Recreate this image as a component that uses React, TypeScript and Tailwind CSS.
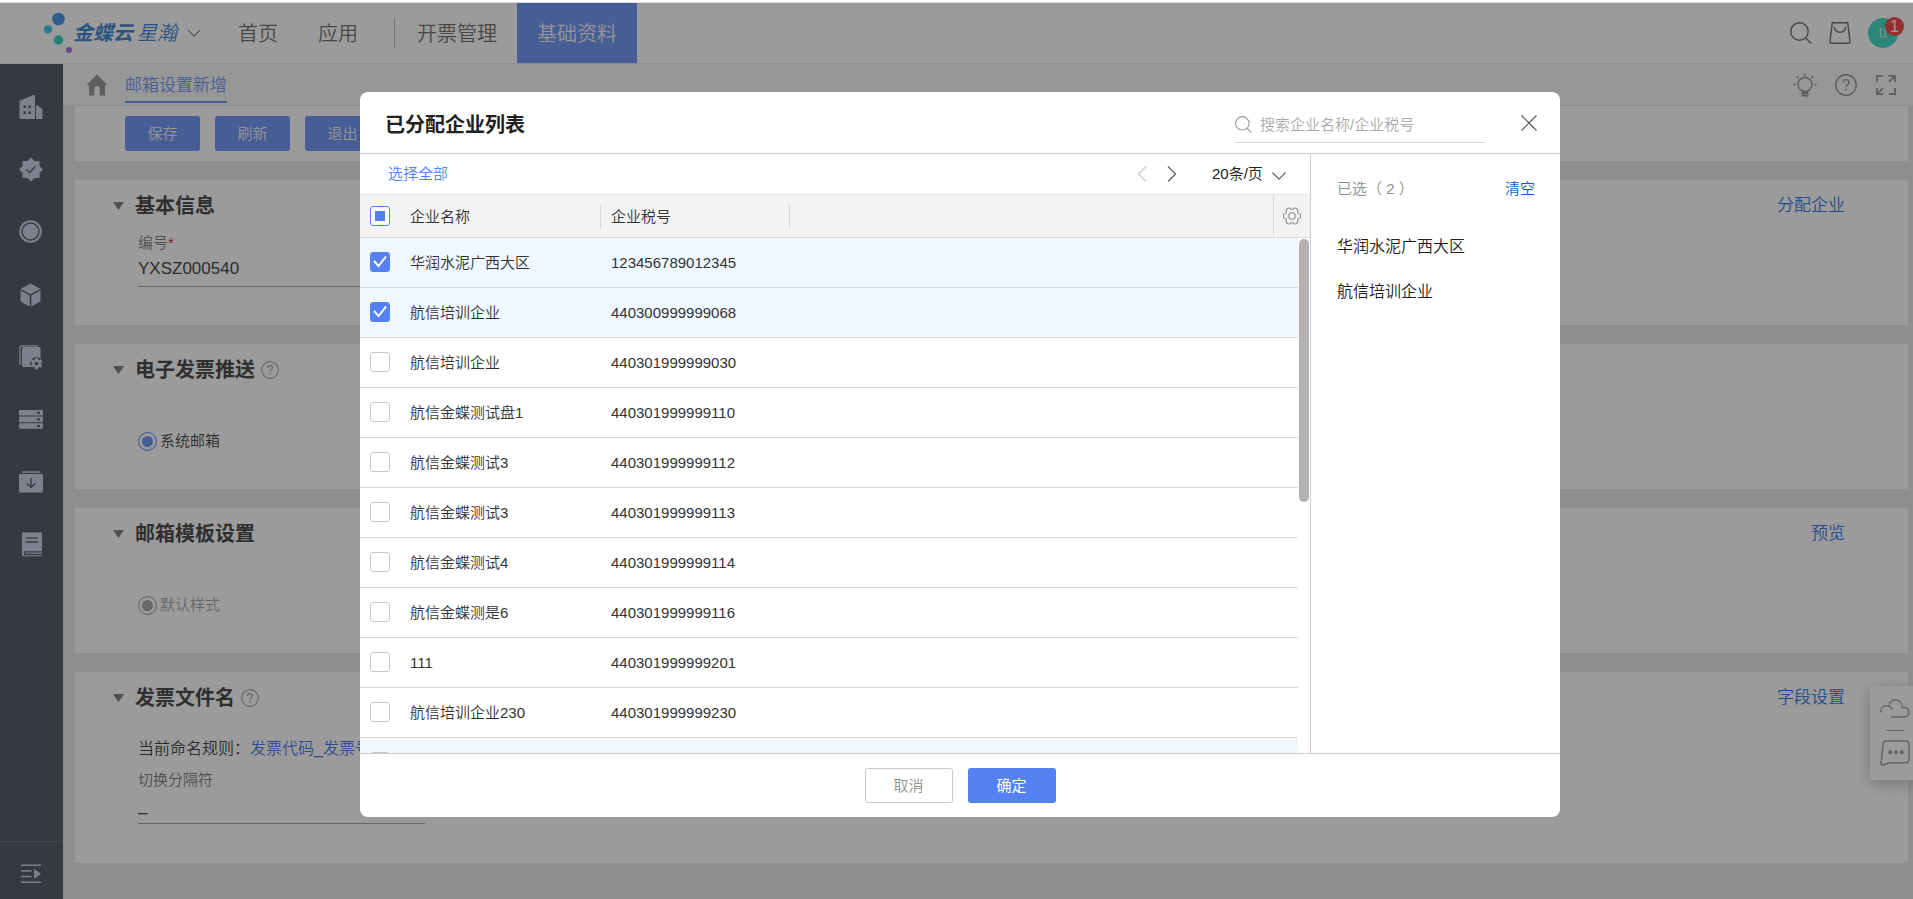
import React, { useState } from 'react';

interface Company {
  id: number;
  name: string;
  taxNo: string;
  hovered?: boolean;
}

const COMPANIES: Company[] = [
  { id: 1, name: '华润水泥广西大区', taxNo: '123456789012345' },
  { id: 2, name: '航信培训企业', taxNo: '440300999999068' },
  { id: 3, name: '航信培训企业', taxNo: '440301999999030' },
  { id: 4, name: '航信金蝶测试盘1', taxNo: '440301999999110' },
  { id: 5, name: '航信金蝶测试3', taxNo: '440301999999112' },
  { id: 6, name: '航信金蝶测试3', taxNo: '440301999999113' },
  { id: 7, name: '航信金蝶测试4', taxNo: '440301999999114' },
  { id: 8, name: '航信金蝶测是6', taxNo: '440301999999116' },
  { id: 9, name: '111', taxNo: '440301999999201' },
  { id: 10, name: '航信培训企业230', taxNo: '440301999999230' },
  { id: 11, name: '', taxNo: '', hovered: true },
];

/* ---------- Icons ---------- */

const SearchIcon = ({ className }: { className: string }) => (
  <svg className={className} viewBox="0 0 22 22" fill="none" stroke="currentColor" strokeWidth="1.4">
    <circle cx="9.5" cy="9.5" r="8.7" />
    <path d="M15.6 15.8 21.4 21.4" />
  </svg>
);

const ChevronIcon = ({ className, d }: { className: string; d: string }) => (
  <svg className={className} viewBox="0 0 16 16" fill="none" stroke="currentColor" strokeWidth="1.4">
    <path d={d} />
  </svg>
);

const HelpIcon = ({ className }: { className: string }) => (
  <svg className={className} viewBox="0 0 22 22" fill="none" stroke="currentColor" strokeWidth="1.4">
    <circle cx="11" cy="11" r="10.2" />
    <path d="M8 8.6c0-1.900 1.300-3 3-3s3 1.100 3 2.800c0 2.300-3 2.300-3 4.800" />
    <path d="M11 14.800v1.800" strokeWidth="1.800" />
  </svg>
);

// six blunt teeth around (9, 9)
const GEAR_POINTS = Array.from({ length: 72 }, (_, i) => {
  const angle = (i * Math.PI) / 36;
  const r = 7.5 + 1.1 * Math.tanh(2 * Math.cos(6 * angle) + 0.8);
  return `${(9 + r * Math.cos(angle)).toFixed(2)},${(9 + r * Math.sin(angle)).toFixed(2)}`;
}).join(' ');

const SIDE_ICONS: { label: string; icon: React.ReactNode }[] = [
  {
    label: '企业',
    icon: (
      <>
        <path d="M1 6.500 14.500 1c1-.3 1.500 0 1.500 1v23H1.500a1 1 0 0 1-1-1V7.500c0-.5.1-.8.500-1z" />
        <path d="M17 11.500h2l4 3.500c.3.300.5.600.5 1V25H17z" />
        <path className="fill-[#393f4d]" d="M4.500 11.500h2.400v2.400H4.500zM9.500 11.500h2.400v2.400H9.500zM4.500 17.500h2.400v2.400H4.500zM9.500 17.500h2.400v2.400H9.500z" />
      </>
    ),
  },
  {
    label: '认证',
    icon: (
      <>
        <path d="M12 .5 15.500 4h5v5L24 12.500 20.500 16v5h-5L12 24.500 8.500 21h-5v-5L0 12.500 3.500 9V4h5z" />
        <path className="stroke-[#393f4d]" fill="none" strokeWidth="1.400" d="m7.500 12.500 3 3 6-6.300" />
      </>
    ),
  },
  {
    label: '记录',
    icon: (
      <>
        <circle cx="11.500" cy="12.500" r="11.300" />
        <circle className="stroke-[#393f4d]" fill="none" strokeWidth="1.400" cx="11.500" cy="12.500" r="8.500" />
      </>
    ),
  },
  {
    label: '商品',
    icon: (
      <>
        <path d="M11.500 1.500 21.500 7l-10 5.300L1.500 7z" />
        <path d="M1.500 8.600 10.700 13.500v11L2.500 20c-.7-.4-1-.8-1-1.500zM21.500 8.600 12.300 13.500v11l8.200-4.500c.7-.4 1-.8 1-1.500z" />
      </>
    ),
  },
  {
    label: '配置',
    icon: (
      <>
        <path fill="none" className="stroke-[#c1cde3]" strokeWidth="1.300" d="M1 21V3.500c0-1 .5-1.700 1.500-1.700H19" />
        <path d="M3 4.500C3 3.600 3.600 3 4.500 3H20c.9 0 1.500.6 1.500 1.500V23h-17C3.600 23 3 22.400 3 21.500z" />
        <circle className="fill-[#393f4d]" cx="17.500" cy="19.500" r="6.400" />
        <path d="m16.300 13.800 2.400 0 .5 1.700 1.100.6 1.700-.5 1.200 2-1.200 1.300v1.200l1.200 1.300-1.200 2-1.700-.5-1.100.6-.5 1.700h-2.400l-.5-1.700-1.100-.6-1.700.5-1.200-2 1.200-1.300v-1.200l-1.200-1.300 1.200-2 1.700.5 1.100-.6z" />
        <circle className="fill-[#393f4d]" cx="17.500" cy="19.500" r="1.800" />
      </>
    ),
  },
  {
    label: '数据',
    icon: (
      <>
        <rect x="0" y="3" width="24" height="5.600" rx=".8" />
        <rect x="0" y="9.600" width="24" height="5.600" rx=".8" />
        <rect x="0" y="16.200" width="24" height="5.600" rx=".8" />
        <path className="fill-[#393f4d]" d="M18 4.800h3v2h-3zM18 11.400h3v2h-3zM18 18h3v2h-3z" />
      </>
    ),
  },
  {
    label: '下载',
    icon: (
      <>
        <path d="M3 2.300h18.500v1.500H3z" />
        <rect x="0" y="5" width="24" height="18.500" rx="1" />
        <path className="stroke-[#393f4d]" fill="none" strokeWidth="1.400" d="M12 9v9.500M7.800 14.300l4.200 4.200 4.200-4.200" />
      </>
    ),
  },
  {
    label: '文档',
    icon: (
      <>
        <path d="M3 1.500C3 .8 3.500.5 4 .5h18c.6 0 1 .4 1 1v22.800H4c-.6 0-1-.4-1-1z" />
        <path className="stroke-[#393f4d]" fill="none" strokeWidth="1.300" d="M6.500 5.800h12.500M6.500 10h12.500M23 19.800H5.500v2.700H23" />
      </>
    ),
  },
];

/* ---------- Page behind the dialog ---------- */

const Header = () => (
  <header className="flex h-[61px] shrink-0 items-center border-b border-[#e0e0e0] bg-white text-xl text-[#555]">
    <div className="flex w-[188px] shrink-0 items-center pl-[44px] italic text-[#1d70c9]">
      <svg className="h-[42px] w-[29px]" viewBox="0 0 29 42">
        <circle cx="14.500" cy="7" r="6.300" fill="#2282e6" />
        <circle cx="4" cy="17.300" r="4.100" fill="#17bcd8" />
        <circle cx="14.500" cy="28" r="4.700" fill="#12cdb8" />
        <circle cx="25" cy="38" r="3" fill="#9559e0" />
      </svg>
      <span className="font-bold">金蝶云</span>
      <span className="ml-1">星瀚</span>
    </div>
    <ChevronIcon className="h-3 w-3" d="M0 4l8 8 8-8" />
    <nav className="flex h-full items-center">
      <a href="#home" className="ml-[38px] pt-[2px]">首页</a>
      <a href="#apps" className="ml-10 pt-[2px]">应用</a>
      <span className="mx-[22px] ml-9 h-[30px] w-px bg-[#b5b5b5]"></span>
      <a href="#invoice" className="pt-[2px]">开票管理</a>
      <a href="#base" className="ml-5 flex h-full items-center bg-[#5582f3] px-5 pt-[2px] text-[#f2f2f2]">基础资料</a>
    </nav>
    <div className="ml-auto flex items-center gap-[17px] pr-[15px]">
      <button aria-label="搜索"><SearchIcon className="h-[22px] w-[22px]" /></button>
      <button aria-label="应用市场">
        <svg className="h-[22px] w-[22px]" viewBox="0 0 22 22" fill="none" stroke="currentColor" strokeWidth="1.400">
          <path d="M3.300.8h15.400l2.400 19.400c0 .6-.3 1-.9 1H1.800c-.6 0-.9-.4-.9-1z" />
          <path d="M5.500 5c.2 3.300 2.500 5.200 5.500 5.200s5.300-1.900 5.500-5.200" />
        </svg>
      </button>
      <div className="relative flex h-[30px] w-[30px] items-center justify-center rounded-full bg-[#1ed5b6] text-base text-white/60">
        tt
        <span className="absolute -right-[6px] -top-px flex h-[19px] w-[19px] items-center justify-center rounded-full bg-[#f02428] text-base text-white">
          1
        </span>
      </div>
    </div>
  </header>
);

const Sidebar = () => (
  <aside className="flex w-[63px] shrink-0 flex-col items-center bg-[#363b49] pr-px pt-[30px]">
    <ul className="flex h-[464px] flex-col justify-between">
      {SIDE_ICONS.map(({ label, icon }) => (
        <li key={label} className="h-[26px]">
          <button aria-label={label} className="block">
            <svg className="h-[26px] w-6 fill-[#c1cde3]" viewBox="0 0 24 26">
              {icon}
            </svg>
          </button>
        </li>
      ))}
    </ul>
    <button aria-label="展开" className="mt-auto flex h-[58px] w-full items-center justify-center border-t border-[#4b5160] pt-[6px]">
      <svg className="h-5 w-5 fill-[#c1cde3]" viewBox="0 0 20 20">
        <path d="M0 .5h20v1.500H0zM0 6.200h10.500v1.500H0zM0 11.700h10.500v1.500H0zM0 17.500h20V19H0zM13 4.700l7 5-7 5z" />
      </svg>
    </button>
  </aside>
);

const TabBar = () => (
  <div className="flex h-[42px] shrink-0 items-center border-b border-[#e2e2e2] bg-[#f6f6f6] pl-[23px] pr-4">
    <svg className="h-[22px] w-[22px] fill-[#848484]" viewBox="0 0 22 22">
      <path d="M11 .5 21.500 11H19v10.500h-5.300v-6.800a2.700 2.700 0 0 0-5.400 0v6.800H3V11H.5z" />
    </svg>
    <a href="#mail" className="ml-[17px] flex h-[39px] items-center self-start border-b-2 border-[#5582f3] pt-[6px] text-[17px] text-[#5582f3]">
      邮箱设置新增
    </a>
    <div className="ml-auto flex items-center gap-[18px] text-[#848484]">
      <button aria-label="提示">
        <svg className="h-6 w-6" viewBox="0 0 24 24" fill="none" stroke="currentColor" strokeWidth="1.500">
          <circle cx="12" cy="11.500" r="7" />
          <path d="M12 .8v2.400M3.800 3.300l1.800 1.800M20.200 3.300l-1.800 1.800M.5 11.500h2.400M21.100 11.500h2.400" />
          <path d="M8.500 20h7M8.500 22.500h7" strokeWidth="2" />
        </svg>
      </button>
      <button aria-label="帮助"><HelpIcon className="h-[22px] w-[22px]" /></button>
      <button aria-label="全屏">
        <svg className="h-[22px] w-[22px]" viewBox="0 0 22 22" fill="none" stroke="currentColor" strokeWidth="1.800">
          <path d="M1.900 8V1.900H8M20 14v6.100h-6.100M13.500 1.900H20V8M20 1.900l-6 6M8 20.100H1.900V14M1.900 20.100l6-6" />
        </svg>
      </button>
    </div>
  </div>
);

interface CardProps {
  title: string;
  help?: boolean;
  action?: string;
  className: string;
  children: React.ReactNode;
}

const Card = ({ title, help, action, className, children }: CardProps) => (
  <section className={`shrink-0 bg-white pl-[63px] pr-[63px] ${className}`}>
    <div className="flex h-[51px] items-center pt-px">
      <svg className="-ml-[25px] mr-[11px] h-2 w-[11px] fill-[#666]" viewBox="0 0 11 8">
        <path d="M0 0h11L5.500 8z" />
      </svg>
      <h2 className="text-xl font-bold text-[#262626]">{title}</h2>
      {help && <HelpIcon className="ml-[6px] h-[18px] w-[18px] text-[#999]" />}
      {action && (
        <a href="#action" className="ml-auto text-[17px] text-[#0d5ee0]">{action}</a>
      )}
    </div>
    {children}
  </section>
);

const RadioOption = ({ label, disabled }: { label: string; disabled?: boolean }) => (
  <label className={`mt-[35px] flex w-fit items-center gap-[3px] text-[15px] ${disabled ? 'text-[#999]' : 'text-[#212121]'}`}>
    <input
      type="radio"
      name={label}
      defaultChecked
      disabled={disabled}
      className="h-[19px] w-[19px] appearance-none rounded-full border border-[#5582f3] bg-[#5582f3] shadow-[inset_0_0_0_3px_#fff] disabled:border-[#999] disabled:bg-[#999]"
    />
    {label}
  </label>
);

const PageContent = () => (
  <main className="flex min-h-0 grow flex-col gap-[19px] overflow-hidden bg-[#e5e5e5] pl-3 pr-[5px]">
    <section className="flex h-[55px] shrink-0 items-start gap-[15px] bg-white pl-[50px] pt-[10px]">
      {['保存', '刷新', '退出'].map((text) => (
        <button key={text} className="h-[35px] w-[75px] rounded-[3px] bg-[#5582f3] pt-[2px] text-[15px] text-[#f2f2f2]">
          {text}
        </button>
      ))}
    </section>

    <Card title="基本信息" action="分配企业" className="h-[145px]">
      <label htmlFor="code" className="block text-[15px] leading-6 text-[#666]">
        编号<span className="text-[#d0021b]">*</span>
      </label>
      <input
        id="code"
        defaultValue="YXSZ000540"
        className="h-8 w-[287px] border-b border-[#999] pb-1 text-[17px] text-[#212121] outline-none"
      />
    </Card>

    <Card title="电子发票推送" help className="h-[145px]">
      <RadioOption label="系统邮箱" />
    </Card>

    <Card title="邮箱模板设置" action="预览" className="h-[145px]">
      <RadioOption label="默认样式" disabled />
    </Card>

    <Card title="发票文件名" help action="字段设置" className="h-[191px]">
      <p className="mt-[14px] text-base leading-6 text-[#212121]">
        当前命名规则：<span className="text-[#1d62e8]">发票代码_发票号码</span>
      </p>
      <label htmlFor="separator" className="mt-[7px] block text-[15px] leading-6 text-[#666]">
        切换分隔符
      </label>
      <input
        id="separator"
        defaultValue="_"
        className="h-8 w-[287px] border-b border-[#999] pb-1 text-[17px] text-[#212121] outline-none"
      />
    </Card>
  </main>
);

const FloatingTools = () => (
  <div className="absolute right-0 top-[684px] flex h-[94px] w-[43px] flex-col items-center rounded-l bg-white pl-[6px] pt-[13px] text-[#909090] shadow-[0_4px_16px_rgba(0,0,0,0.3)]">
    <button aria-label="云服务">
      <svg className="h-[19px] w-[30px]" viewBox="0 0 30 19" fill="none" stroke="currentColor" strokeWidth="1.400">
        <path d="M1 13.500C.3 9.500 3 6.800 6.500 6.800c2.800 0 4.700 1.500 5.500 3.800M9.200 5.500C10.200 2.700 12.300 1 15.200 1c4.200 0 7 3 7 7.800 4-1 6.800 1 6.800 4.300 0 3-2 4.900-5 4.900H11" />
      </svg>
    </button>
    <span className="mt-3 h-px w-[18px] bg-[#909090]"></span>
    <button aria-label="客服" className="mt-[9px]">
      <svg className="h-[26px] w-[30px]" viewBox="0 0 30 26" fill="none" stroke="currentColor" strokeWidth="1.500">
        <path d="M3 4.500C3 2.200 4.200 1 6.500 1h19C27.800 1 29 2.200 29 4.500v14.800c0 2.300-1.200 3.500-3.500 3.500H9.500L3 25c-1.300.3-2.200-.2-2-1.400z" />
        <g className="fill-[#909090] stroke-none">
          <circle cx="10.200" cy="12.300" r="2" />
          <circle cx="16" cy="12.300" r="2" />
          <circle cx="21.800" cy="12.300" r="2" />
        </g>
      </svg>
    </button>
  </div>
);

/* ---------- Dialog ---------- */

interface CheckBoxProps {
  label: string;
  checked: boolean;
  partial?: boolean;
  onChange: () => void;
}

const CheckBox = ({ label, checked, partial, onChange }: CheckBoxProps) => (
  <span className="relative block h-5 w-5">
    <input
      type="checkbox"
      aria-label={label}
      checked={checked}
      onChange={onChange}
      className={`block h-5 w-5 appearance-none rounded-[3px] border ${
        partial
          ? 'border-[#5582f3] bg-white'
          : 'border-[#c8c8c8] bg-white checked:border-[#5582f3] checked:bg-[#5582f3]'
      }`}
    />
    {partial && <span className="pointer-events-none absolute left-[5px] top-[5px] h-[10px] w-[10px] bg-[#5582f3]"></span>}
    {!partial && checked && (
      <svg className="pointer-events-none absolute left-0 top-0 h-5 w-5" viewBox="0 0 20 20" fill="none" stroke="#fff" strokeWidth="2">
        <path d="m4 9 4.500 5L16 4.500" />
      </svg>
    )}
  </span>
);

const AssignedCompaniesDialog = () => {
  const [selected, setSelected] = useState<number[]>([1, 2]);

  const toggle = (id: number) => {
    setSelected((prev) => (prev.includes(id) ? prev.filter((x) => x !== id) : [...prev, id]));
  };

  const toggleAll = () => {
    setSelected(selected.length === COMPANIES.length ? [] : COMPANIES.map((c) => c.id));
  };

  return (
    <div role="dialog" aria-label="已分配企业列表" className="flex w-[1200px] flex-col overflow-hidden rounded-lg bg-white">
      {/* Title bar */}
      <div className="flex h-[62px] items-center border-b border-[#ccc] pl-[25px] pr-[23px]">
        <h1 className="pt-1 text-xl font-bold text-[#212121]">已分配企业列表</h1>
        <div className="mb-[10px] ml-auto flex h-9 w-[250px] items-center gap-2 self-end border-b border-[#d9d9d9] text-[#999]">
          <SearchIcon className="h-[17px] w-[17px]" />
          <input
            aria-label="搜索"
            placeholder="搜索企业名称/企业税号"
            className="grow pt-[2px] text-[15px] outline-none placeholder:text-[#aaa]"
          />
        </div>
        <button aria-label="关闭" className="ml-9 text-[#555]">
          <svg className="h-4 w-4" viewBox="0 0 16 16" fill="none" stroke="currentColor" strokeWidth="1.200">
            <path d="M.5.500l15 15M15.500.500l-15 15" />
          </svg>
        </button>
      </div>

      <div className="flex h-[599px]">
        {/* Company list */}
        <div className="flex min-w-0 grow flex-col">
          <div className="flex h-10 shrink-0 items-center pl-7 pr-6 text-[15px]">
            <button onClick={toggleAll} className="text-[#5582f3]">选择全部</button>
            <button aria-label="上一页" className="ml-auto text-[#ccc]">
              <ChevronIcon className="h-4 w-4" d="M12 .500 4.500 8l7.500 7.500" />
            </button>
            <button aria-label="下一页" className="ml-[14px] text-[#666]">
              <ChevronIcon className="h-4 w-4" d="M4 .500 11.500 8 4 15.500" />
            </button>
            <div className="relative ml-8">
              <select aria-label="每页条数" className="w-[74px] appearance-none text-[#212121] outline-none">
                <option>20条/页</option>
                <option>50条/页</option>
              </select>
              <ChevronIcon className="pointer-events-none absolute right-0 top-[6px] h-[14px] w-[14px] text-[#666]" d="M.5 4 8 11.500 15.500 4" />
            </div>
          </div>

          <div className="relative min-h-0 grow overflow-hidden">
            <table className="w-full table-fixed border-separate border-spacing-0 text-left text-[15px] text-[#333]">
              <colgroup>
                <col className="w-10" />
                <col className="w-[201px]" />
                <col className="w-[189px]" />
                <col />
                <col className="w-[25px]" />
                <col className="w-3" />
              </colgroup>
              <thead>
                <tr className="[&>th]:h-11 [&>th]:border-y [&>th]:border-t-[#e5e5e5] [&>th]:border-b-[#d9d9d9] [&>th]:bg-[#f3f3f3] [&>th]:p-0 [&>th]:font-[350]">
                  <th scope="col" className="!pl-[10px]">
                    <CheckBox label="选择本页" checked partial={selected.length > 0} onChange={toggleAll} />
                  </th>
                  <th scope="col">
                    <div className="flex h-[25px] items-center border-r border-[#d9d9d9] pl-[10px] pt-[2px]">企业名称</div>
                  </th>
                  <th scope="col">
                    <div className="flex h-[25px] items-center border-r border-[#d9d9d9] pl-[10px] pt-[2px]">企业税号</div>
                  </th>
                  <th></th>
                  <th colSpan={2} className="border-l border-l-[#d9d9d9]">
                    <button aria-label="列设置" className="mx-auto block text-[#909090]">
                      <svg className="h-[18px] w-[18px]" viewBox="0 0 18 18" fill="none" stroke="currentColor" strokeWidth="1.100">
                        <polygon points={GEAR_POINTS} />
                        <circle cx="9" cy="9" r="3.300" />
                      </svg>
                    </button>
                  </th>
                </tr>
              </thead>
              <tbody>
                {COMPANIES.map((company) => {
                  const checked = selected.includes(company.id);
                  const cell = `h-[50px] border-b border-[#d9d9d9] ${checked || company.hovered ? 'bg-[#f0f8ff]' : ''}`;
                  return (
                    <tr key={company.id}>
                      <td className={`${cell} pb-[2px] pl-[10px]`}>
                        <CheckBox label={company.name} checked={checked} onChange={() => toggle(company.id)} />
                      </td>
                      <td className={`${cell} pl-[10px] pt-[2px]`}>{company.name}</td>
                      <td className={`${cell} pl-[10px] pt-[2px]`}>{company.taxNo}</td>
                      <td colSpan={2} className={cell}></td>
                      <td></td>
                    </tr>
                  );
                })}
              </tbody>
            </table>
            {/* Scrollbar thumb */}
            <div className="absolute right-px top-[45px] h-[263px] w-[10px] rounded-full bg-[#b2b2b2]"></div>
          </div>
        </div>

        {/* Selection panel */}
        <div className="w-[250px] shrink-0 border-l border-[#ccc] pl-[26px] pr-[25px]">
          <div className="flex h-[70px] items-center justify-between text-[15px] text-[#909090]">
            <span>已选（ {selected.length} ）</span>
            <button onClick={() => setSelected([])} className="text-[#0d5ee0]">清空</button>
          </div>
          <ul className="text-base text-[#212121]">
            {COMPANIES.filter((c) => selected.includes(c.id)).map((c) => (
              <li key={c.id} className="flex h-[45px] items-center">{c.name}</li>
            ))}
          </ul>
        </div>
      </div>

      <div className="flex h-16 items-center justify-center gap-[15px] border-t border-[#ccc] text-[15px]">
        <button className="h-[35px] w-[88px] rounded-[3px] border border-[#c9c9d4] pt-px text-[#909090]">取消</button>
        <button className="h-[35px] w-[88px] rounded-[3px] bg-[#5582f3] pt-px font-normal text-white">确定</button>
      </div>
    </div>
  );
};

const App = () => (
  <div
    lang="zh-CN"
    className="relative flex h-screen flex-col overflow-hidden border-t-2 border-white font-['Liberation_Sans','Noto_Sans_CJK_SC',sans-serif] font-[350]"
  >
    <div className="h-px shrink-0 bg-[#ddd]"></div>
    <Header />
    <div className="flex min-h-0 grow">
      <Sidebar />
      <div className="flex min-w-0 grow flex-col">
        <TabBar />
        <PageContent />
      </div>
    </div>
    <FloatingTools />

    {/* Mask and dialog */}
    <div className="absolute inset-x-0 bottom-0 top-px flex items-start justify-center bg-[#373737]/50 pl-[7px] pt-[89px]">
      <AssignedCompaniesDialog />
    </div>
  </div>
);

export default App;
